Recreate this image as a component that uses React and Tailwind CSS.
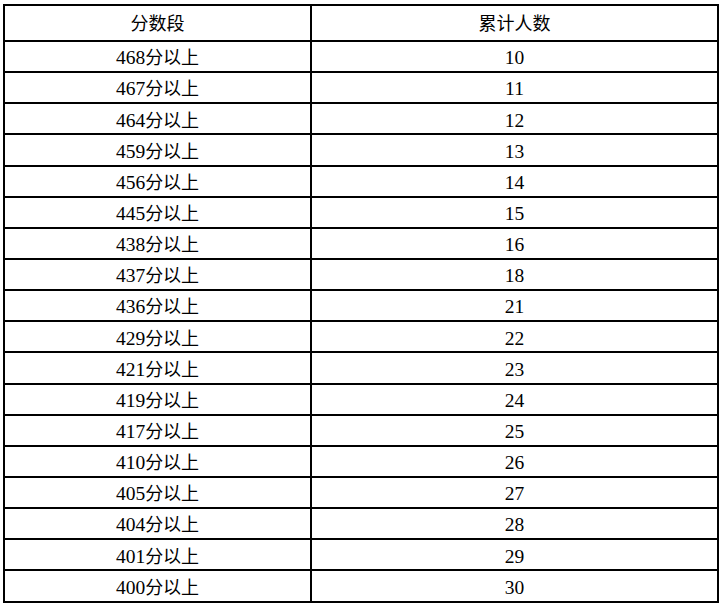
const rows = [
  ['468', 10], ['467', 11], ['464', 12], ['459', 13], ['456', 14], ['445', 15],
  ['438', 16], ['437', 18], ['436', 21], ['429', 22], ['421', 23], ['419', 24],
  ['417', 25], ['410', 26], ['405', 27], ['404', 28], ['401', 29], ['400', 30],
];

export default function App() {
  return (
    <div className="w-[723px] h-[607px] bg-white pt-[4px] pl-[3px]" style={{ fontFamily: '"Liberation Serif", "Noto Sans CJK SC", serif' }}>
      <table className="w-[716px] border-collapse border-2 border-black text-[18px] text-black table-fixed">
        <colgroup>
          <col className="w-[307px]" />
          <col />
        </colgroup>
        <thead>
          <tr className="h-[36px]">
            <th className="border-2 border-black font-normal text-center leading-none pt-[2px]">分数段</th>
            <th className="border-2 border-black font-normal text-center leading-none pt-[2px]">累计人数</th>
          </tr>
        </thead>
        <tbody>
          {rows.map(([score, n]) => (
            <tr key={score} className="h-[31.15px]">
              <td className="border-2 border-black text-center leading-none p-0 pt-[3px]">
                <span className="text-[19.5px]">{score}</span>分以上
              </td>
              <td className="border-2 border-black text-center leading-none p-0 pt-[3px]">
                <span className="text-[19.5px]">{n}</span>
              </td>
            </tr>
          ))}
        </tbody>
      </table>
    </div>
  );
}
